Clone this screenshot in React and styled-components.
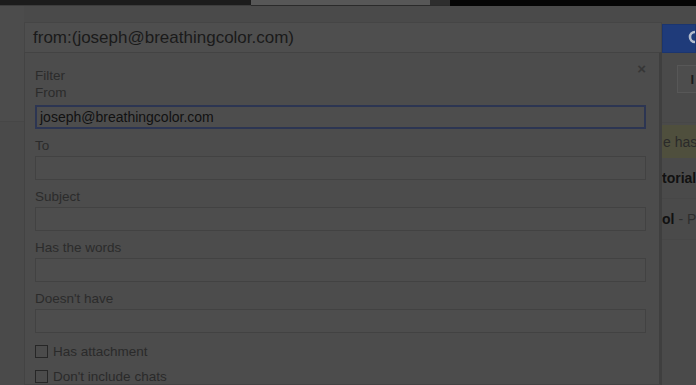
import React from "react";
import styled, { createGlobalStyle } from "styled-components";

const GlobalStyle = createGlobalStyle`
  html, body {
    margin: 0;
    padding: 0;
    background: #4a4a4a;
    overflow: hidden;
  }
  body {
    font-family: "Liberation Sans", Arial, sans-serif;
  }
`;

const Page = styled.div`
  width: 696px;
  height: 385px;
  display: flex;
  flex-direction: column;
  overflow: hidden;
  background: #4a4a4a;
`;

const TabStrip = styled.div`
  display: flex;
  height: 6px;
  flex-shrink: 0;
`;

const TabSegment = styled.div`
  width: ${(p) => (p.$width ? `${p.$width}px` : "auto")};
  flex: ${(p) => (p.$width ? "none" : "1")};
  background: ${(p) => p.$bg};
  border-bottom: 1px solid ${(p) => p.$line};
  box-sizing: border-box;
`;

const Main = styled.div`
  flex: 1;
  display: flex;
  min-height: 0;
`;

const Gutter = styled.div`
  width: 24px;
  flex-shrink: 0;
  display: flex;
  flex-direction: column;
`;

const GutterBand = styled.div`
  height: 115px;
  border-bottom: 1px solid #464646;
  background: #4c4c4c;
`;

const Center = styled.div`
  width: 638px;
  flex-shrink: 0;
  display: flex;
  flex-direction: column;
  padding-top: 16px;
`;

const SearchBox = styled.div`
  height: 31px;
  box-sizing: border-box;
  background: #4e4e4e;
  border: 1px solid #454545;
  border-bottom: none;
  display: flex;
  align-items: center;
  padding-left: 8px;
  font-size: 17px;
  color: #1a1a1a;
`;

const Dialog = styled.div`
  flex: 1;
  background: #4c4c4c;
  border: 1px solid #434343;
  border-right: 3px solid #3f3f3f;
  padding: 10px 12px 0 10px;
  display: flex;
  flex-direction: column;
`;

const DialogHeader = styled.div`
  display: flex;
  justify-content: space-between;
  align-items: flex-start;
  padding-top: 4px;
`;

const CloseButton = styled.span`
  font-size: 15px;
  font-weight: bold;
  color: #363636;
  margin-top: -6px;
  margin-right: 1px;
  line-height: 15px;
`;

const Label = styled.div`
  font-size: 13.5px;
  line-height: 17px;
  color: #2b2b2b;
  margin-top: ${(p) => (p.$tight ? "0" : "8px")};
  margin-bottom: ${(p) => (p.$first ? "0" : "2px")};
`;

const Field = styled.div`
  height: 24px;
  width: 611px;
  box-sizing: border-box;
  background: #4d4d4d;
  border: ${(p) => (p.$active ? "2px solid #2c3552" : "1px solid #424242")};
  display: flex;
  align-items: center;
  padding-left: ${(p) => (p.$active ? "3px" : "4px")};
  font-size: 14px;
  color: #111;
  margin-top: ${(p) => (p.$active ? "2px" : "0")};
`;

const CheckRow = styled.label`
  display: flex;
  align-items: center;
  gap: 5px;
  font-size: 13.5px;
  color: #2a2a2a;
  margin-top: ${(p) => p.$mt}px;
`;

const Box = styled.span`
  width: 13px;
  height: 13px;
  box-sizing: border-box;
  border: 1px solid #262626;
  background: #4b4b4b;
  display: inline-block;
`;

const RightPane = styled.div`
  flex: 1;
  display: flex;
  flex-direction: column;
  padding-top: 18px;
  overflow: hidden;
`;

const SearchButton = styled.div`
  height: 29px;
  background: #1f3b7a;
  border: 1px solid #1b356f;
  box-sizing: border-box;
  display: flex;
  align-items: center;
  padding-left: 23px;
  overflow: hidden;
`;

const SearchIcon = styled.svg`
  flex-shrink: 0;
  width: 20px;
  height: 20px;
`;

const Toolbar = styled.div`
  height: 70px;
  display: flex;
  align-items: flex-start;
  justify-content: flex-end;
  padding-top: 29px;
  box-sizing: border-box;
  border-bottom: 1px solid #474747;
`;

const ToolButton = styled.div`
  width: 19px;
  height: 28px;
  box-sizing: border-box;
  border: 1px solid #575757;
  border-right: none;
  background: #4d4d4d;
  display: flex;
  align-items: center;
  justify-content: flex-end;
  font-size: 13px;
  font-weight: bold;
  color: #1c1c1c;
  padding-right: 2px;
  margin-top: -17px;
`;

const Notice = styled.div`
  height: 33px;
  margin-top: 2px;
  background: #4f4f3d;
  display: flex;
  align-items: center;
  white-space: nowrap;
  font-size: 14px;
  color: #2a2a2a;
  padding-left: 1px;
`;

const MailRow = styled.div`
  height: 40px;
  display: flex;
  align-items: center;
  white-space: nowrap;
  font-size: 14px;
  color: #2e2e2e;
  border-bottom: 1px solid #474747;
`;

const Strong = styled.b`
  color: #111;
  margin-right: 4px;
`;

const fields = ["To", "Subject", "Has the words", "Doesn't have"];

export default function App() {
  return (
    <Page>
      <GlobalStyle />
      <TabStrip>
        <TabSegment $width={251} $bg="#1c1c1c" $line="#3c3c3c" />
        <TabSegment $width={179} $bg="#575757" $line="#2a2a2a" />
        <TabSegment $width={20} $bg="#2e2e2e" $line="#2a2a2a" />
        <TabSegment $bg="#050505" $line="#050505" />
      </TabStrip>
      <Main>
        <Gutter>
          <GutterBand />
        </Gutter>
        <Center>
          <SearchBox>from:(joseph@breathingcolor.com)</SearchBox>
          <Dialog>
            <DialogHeader>
              <Label $tight $first>Filter</Label>
              <CloseButton>×</CloseButton>
            </DialogHeader>
            <Label $tight>From</Label>
            <Field $active>joseph@breathingcolor.com</Field>
            {fields.map((f) => (
              <React.Fragment key={f}>
                <Label>{f}</Label>
                <Field />
              </React.Fragment>
            ))}
            <CheckRow $mt={11}>
              <Box />
              Has attachment
            </CheckRow>
            <CheckRow $mt={10}>
              <Box />
              Don't include chats
            </CheckRow>
          </Dialog>
        </Center>
        <RightPane>
          <SearchButton>
            <SearchIcon viewBox="0 0 20 20">
              <circle cx="9" cy="8" r="5" fill="none" stroke="#b4bccd" strokeWidth="2.6" />
              <path d="M12.5 11.5 L17 16" stroke="#b4bccd" strokeWidth="2.6" />
            </SearchIcon>
          </SearchButton>
          <Toolbar>
            <ToolButton>I</ToolButton>
          </Toolbar>
          <Notice>e has been sent.</Notice>
          <MailRow>
            <Strong>torial</Strong>
          </MailRow>
          <MailRow>
            <Strong>ol</Strong>- Pa
          </MailRow>
        </RightPane>
      </Main>
    </Page>
  );
}
